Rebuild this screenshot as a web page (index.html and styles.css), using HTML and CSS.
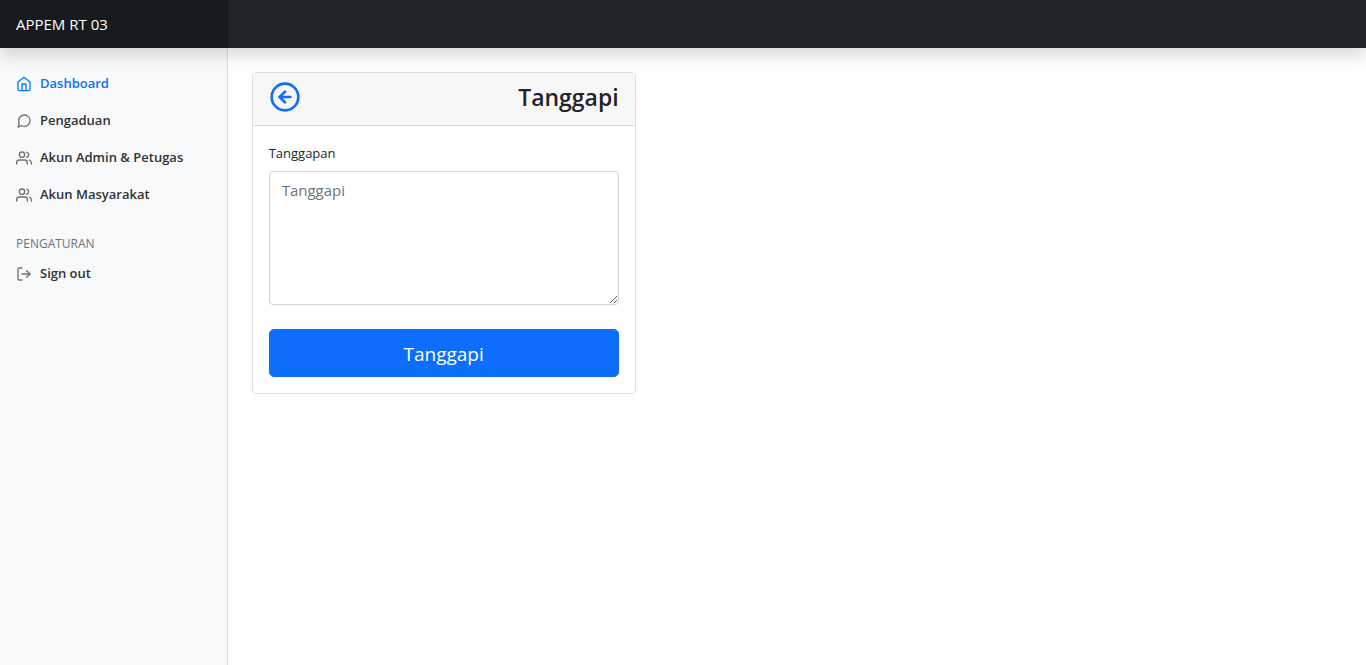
FILE: index.html
```html
<!DOCTYPE html>
<html lang="id">
<head>
<meta charset="utf-8">
<meta name="viewport" content="width=device-width, initial-scale=1">
<title>APPEM RT 03</title>
<link rel="stylesheet" href="styles.css">
</head>
<body>
<header class="navbar">
  <a class="brand" href="#">APPEM RT 03</a>
</header>
<div class="layout">
  <nav class="sidebar">
    <ul class="nav">
      <li><a class="nav-link active" href="#">
        <svg class="icon" viewBox="0 0 24 24"><path d="M3 9l9-7 9 7v11a2 2 0 0 1-2 2H5a2 2 0 0 1-2-2z"/><polyline points="9 22 9 12 15 12 15 22"/></svg>
        Dashboard</a></li>
      <li><a class="nav-link" href="#">
        <svg class="icon" viewBox="0 0 24 24"><path d="M21 11.5a8.38 8.38 0 0 1-.9 3.8 8.5 8.5 0 0 1-7.6 4.7 8.38 8.38 0 0 1-3.8-.9L3 21l1.9-5.7a8.38 8.38 0 0 1-.9-3.8 8.5 8.5 0 0 1 4.7-7.6 8.38 8.38 0 0 1 3.8-.9h.5a8.48 8.48 0 0 1 8 8v.5z"/></svg>
        Pengaduan</a></li>
      <li><a class="nav-link" href="#">
        <svg class="icon" viewBox="0 0 24 24"><path d="M17 21v-2a4 4 0 0 0-4-4H5a4 4 0 0 0-4 4v2"/><circle cx="9" cy="7" r="4"/><path d="M23 21v-2a4 4 0 0 0-3-3.87M16 3.13a4 4 0 0 1 0 7.75"/></svg>
        Akun Admin &amp; Petugas</a></li>
      <li><a class="nav-link" href="#">
        <svg class="icon" viewBox="0 0 24 24"><path d="M17 21v-2a4 4 0 0 0-4-4H5a4 4 0 0 0-4 4v2"/><circle cx="9" cy="7" r="4"/><path d="M23 21v-2a4 4 0 0 0-3-3.87M16 3.13a4 4 0 0 1 0 7.75"/></svg>
        Akun Masyarakat</a></li>
    </ul>
    <h6 class="sidebar-heading">Pengaturan</h6>
    <ul class="nav">
      <li><a class="nav-link" href="#">
        <svg class="icon" viewBox="0 0 24 24"><path d="M9 21H5a2 2 0 0 1-2-2V5a2 2 0 0 1 2-2h4"/><polyline points="16 17 21 12 16 7"/><line x1="21" y1="12" x2="9" y2="12"/></svg>
        Sign out</a></li>
    </ul>
  </nav>
  <main class="content">
    <section class="card">
      <div class="card-header">
        <a class="back" href="#" aria-label="Kembali">
          <svg class="icon-back" viewBox="0 0 24 24"><circle cx="12" cy="12" r="10"/><polyline points="12 8 8 12 12 16"/><line x1="16" y1="12" x2="8" y2="12"/></svg>
        </a>
        <h1 class="card-title">Tanggapi</h1>
      </div>
      <form class="card-body">
        <label class="label" for="tanggapan">Tanggapan</label>
        <textarea class="textarea" id="tanggapan" rows="4" placeholder="Tanggapi"></textarea>
        <button class="button" type="button">Tanggapi</button>
      </form>
    </section>
  </main>
</div>
</body>
</html>
```

FILE: styles.css
```css
*, *::before, *::after { box-sizing: border-box; }

body {
  margin: 0;
  min-height: 100vh;
  display: flex;
  flex-direction: column;
  font-family: "Segoe UI", "Open Sans", "Noto Sans", sans-serif;
  font-size: 16px;
  line-height: 1.5;
  color: #212529;
  background: #fff;
}

a { text-decoration: none; }

.navbar {
  position: relative;
  z-index: 1;
  display: flex;
  background: #212529;
  box-shadow: 0 8px 16px rgba(0, 0, 0, .15);
}

.brand {
  width: 16.6667%;
  padding: 12px 16px;
  font-size: 15px;
  line-height: 24px;
  color: #fff;
  background: rgba(0, 0, 0, .25);
  box-shadow: inset -1px 0 0 rgba(0, 0, 0, .25);
}

.layout {
  flex: 1;
  display: flex;
}

.sidebar {
  width: 16.6667%;
  padding-top: 17px;
  background: #f8f9fa;
  box-shadow: inset -1px 0 0 rgba(0, 0, 0, .1);
}

.nav {
  margin: 0;
  padding: 0;
  list-style: none;
}

.nav-link {
  display: flex;
  align-items: center;
  gap: 8px;
  padding: 8px 16px;
  font-size: 13px;
  line-height: 21px;
  font-weight: 600;
  color: #333;
}

.nav-link.active { color: #0d6efd; }

.icon {
  flex: none;
  width: 16px;
  height: 16px;
  fill: none;
  stroke: #727272;
  stroke-width: 2;
  stroke-linecap: round;
  stroke-linejoin: round;
}

.active .icon { stroke: #007bff; }

.sidebar-heading {
  margin: 24px 0 4px;
  padding: 0 16px;
  font-size: 12px;
  line-height: 14px;
  font-weight: 500;
  text-transform: uppercase;
  color: #6c757d;
}

.content {
  flex: 1;
  padding: 24px;
}

.card {
  max-width: 384px;
  border: 1px solid #dfdfdf;
  border-radius: 4px;
  background: #fff;
}

.card-header {
  display: flex;
  justify-content: space-between;
  padding: 8px 16px;
  border-bottom: 1px solid #d8d8d8;
  background: #f7f7f7;
}

.back {
  display: flex;
  height: 36px;
}

.icon-back {
  width: 32px;
  height: 32px;
  fill: none;
  stroke: #0d6efd;
  stroke-width: 2;
  stroke-linecap: round;
  stroke-linejoin: round;
}

.card-title {
  margin: 0;
  font-size: 23px;
  line-height: 32px;
  font-weight: 600;
}

.card-body {
  display: flex;
  flex-direction: column;
  padding: 16px;
}

.label {
  margin-bottom: 6px;
  font-size: 13px;
  line-height: 23px;
}

.textarea {
  height: 134px;
  margin: 0 0 24px;
  padding: 6px 12px;
  font: inherit;
  font-size: 15px;
  line-height: 24px;
  color: #212529;
  border: 1px solid #ced4da;
  border-radius: 4px;
  resize: vertical;
}

.textarea::placeholder { color: #6c757d; opacity: 1; }

.button {
  padding: 9px 16px 7px;
  font: inherit;
  font-size: 19px;
  line-height: 30px;
  color: #fff;
  background: #0d6efd;
  border: 1px solid #0d6efd;
  border-radius: 5px;
  cursor: pointer;
}
```
